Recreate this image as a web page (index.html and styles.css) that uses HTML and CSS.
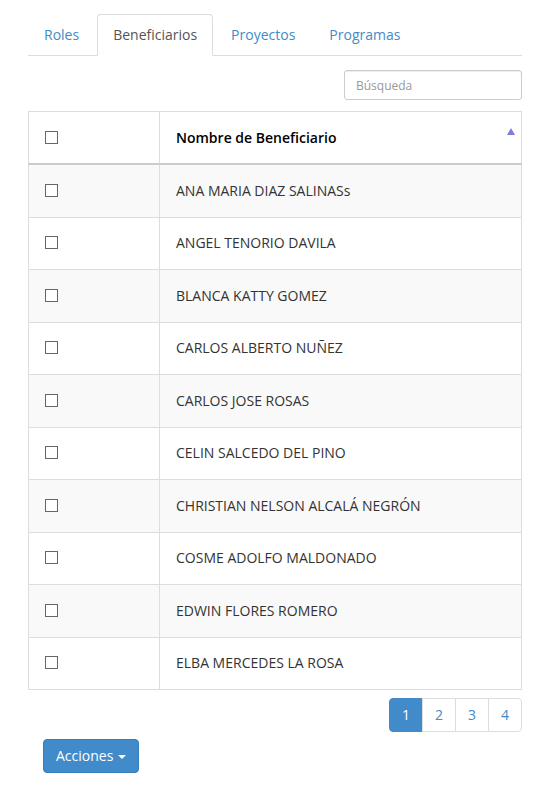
FILE: index.html
```html
<!DOCTYPE html>
<html>
<head>
<meta charset="utf-8">
<link rel="stylesheet" href="styles.css">
</head>
<body>
<div class="page">
  <ul class="tabs">
    <li class="tab"><a>Roles</a></li>
    <li class="tab active"><a>Beneficiarios</a></li>
    <li class="tab"><a>Proyectos</a></li>
    <li class="tab"><a>Programas</a></li>
  </ul>
  <div class="toolbar">
    <input class="search" type="text" placeholder="Búsqueda">
  </div>
  <table class="grid">
    <thead>
      <tr>
        <th class="chk"><span class="box"></span></th>
        <th class="name">Nombre de Beneficiario<span class="sort"></span></th>
      </tr>
    </thead>
    <tbody>
      <tr><td class="chk"><span class="box"></span></td><td>ANA MARIA DIAZ SALINASs</td></tr>
      <tr><td class="chk"><span class="box"></span></td><td>ANGEL TENORIO DAVILA</td></tr>
      <tr><td class="chk"><span class="box"></span></td><td>BLANCA KATTY GOMEZ</td></tr>
      <tr><td class="chk"><span class="box"></span></td><td>CARLOS ALBERTO NUÑEZ</td></tr>
      <tr><td class="chk"><span class="box"></span></td><td>CARLOS JOSE ROSAS</td></tr>
      <tr><td class="chk"><span class="box"></span></td><td>CELIN SALCEDO DEL PINO</td></tr>
      <tr><td class="chk"><span class="box"></span></td><td>CHRISTIAN NELSON ALCALÁ NEGRÓN</td></tr>
      <tr><td class="chk"><span class="box"></span></td><td>COSME ADOLFO MALDONADO</td></tr>
      <tr><td class="chk"><span class="box"></span></td><td>EDWIN FLORES ROMERO</td></tr>
      <tr><td class="chk"><span class="box"></span></td><td>ELBA MERCEDES LA ROSA</td></tr>
    </tbody>
  </table>
  <div class="pager-row">
    <ul class="pagination">
      <li class="active"><a>1</a></li>
      <li><a>2</a></li>
      <li><a>3</a></li>
      <li><a>4</a></li>
    </ul>
  </div>
  <div class="actions">
    <button class="btn">Acciones <span class="caret"></span></button>
  </div>
</div>
</body>
</html>
```

FILE: styles.css
```css
* { box-sizing: border-box; }
html, body { margin: 0; padding: 0; background: #fff; }
body {
  font-family: "Open Sans", "Liberation Sans", sans-serif;
  font-size: 14px;
  line-height: 20px;
  color: #333;
}
.page { padding: 14px 28px 0 28px; }

.tabs {
  list-style: none;
  margin: 0;
  padding: 0;
  display: flex;
  border-bottom: 1px solid #ddd;
}
.tab { margin-bottom: -1px; margin-right: 2px; }
.tab a {
  display: block;
  padding: 10px 15px;
  border: 1px solid transparent;
  border-radius: 4px 4px 0 0;
  color: #428bca;
  line-height: 20px;
}
.tab.active a {
  color: #555;
  background: #fff;
  border-color: #ddd #ddd transparent #ddd;
}

.toolbar {
  display: flex;
  justify-content: flex-end;
  margin-top: 14px;
  margin-bottom: 11px;
}
.search {
  width: 178px;
  height: 30px;
  padding: 5px 11px;
  font-family: inherit;
  font-size: 12px;
  border: 1px solid #ccc;
  border-radius: 3px;
  box-shadow: inset 0 1px 1px rgba(0,0,0,0.075);
  color: #555;
}
.search::placeholder { color: #999; }

.grid {
  width: 100%;
  border-collapse: collapse;
  border: 1px solid #ddd;
}
.grid th, .grid td {
  border: 1px solid #ddd;
  padding: 15.75px 16px 15.75px 16px;
  text-align: left;
  vertical-align: middle;
}
.grid thead th {
  border-bottom: 2px solid #ccc;
  font-weight: 600;
  color: #000;
  padding-top: 15.5px;
  padding-bottom: 15.5px;
}
.grid th.name { position: relative; }
.grid .chk { width: 131px; }
.grid tbody tr:nth-child(odd) td { background: #f9f9f9; }
.box {
  display: inline-block;
  width: 13px;
  height: 13px;
  border: 1px solid #666;
  background: #fff;
  vertical-align: -1px;
}
.sort {
  position: absolute;
  right: 6px;
  top: 16px;
  width: 0;
  height: 0;
  border-left: 4.5px solid transparent;
  border-right: 4.5px solid transparent;
  border-bottom: 7px solid #7e7fdc;
}

.pager-row {
  display: flex;
  justify-content: flex-end;
  margin-top: 8px;
}
.pagination {
  list-style: none;
  margin: 0;
  padding: 0;
  display: flex;
}
.pagination li a {
  display: block;
  padding: 6px 12px;
  line-height: 20px;
  border: 1px solid #ddd;
  margin-left: -1px;
  color: #428bca;
  background: #fff;
}
.pagination li:first-child a { margin-left: 0; border-radius: 4px 0 0 4px; }
.pagination li:last-child a { border-radius: 0 4px 4px 0; }
.pagination li.active a {
  background: #428bca;
  border-color: #428bca;
  color: #fff;
}

.actions { padding: 7px 15px 20px; }
.btn {
  font-family: inherit;
  font-size: 14px;
  line-height: 20px;
  padding: 6px 12px;
  color: #fff;
  background: #428bca;
  border: 1px solid #357ebd;
  border-radius: 4px;
}
.caret {
  display: inline-block;
  width: 0;
  height: 0;
  margin-left: 1px;
  vertical-align: middle;
  border-top: 4px solid #fff;
  border-left: 4px solid transparent;
  border-right: 4px solid transparent;
}
```
